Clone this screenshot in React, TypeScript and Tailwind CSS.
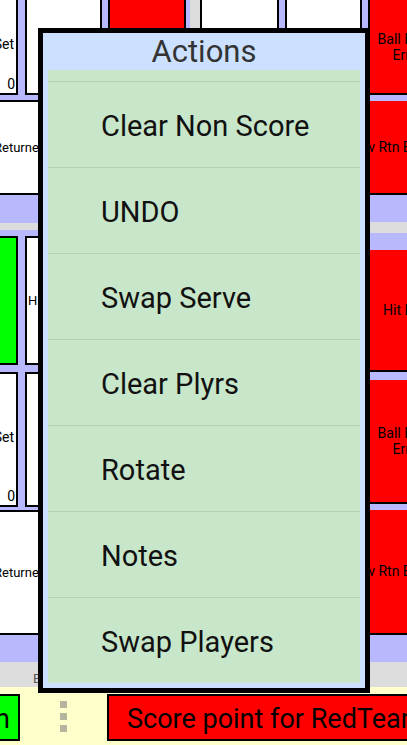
import React from "react"

const actions = ["Clear Non Score", "UNDO", "Swap Serve", "Clear Plyrs", "Rotate", "Notes", "Swap Players"]

function CountCell({ top }: { top?: boolean }) {
  return (
    <div
      className={`flex w-[18px] shrink-0 flex-col overflow-hidden border-r-2 border-b-2 border-black bg-white text-[14px] leading-none text-black ${
        top ? "" : "border-t-2"
      }`}
    >
      <div className="flex flex-1 items-center justify-end pr-[2px] pt-[11px] whitespace-nowrap">Set</div>
      <div className="pb-[2px] pr-[1px] text-right">0</div>
    </div>
  )
}

function LeftPanel() {
  return (
    <div className="flex w-[190px] shrink-0 flex-col">
      {/* row A */}
      <div className="flex h-[95px]">
        <CountCell top />
        <div className="ml-[7px] w-[77px] shrink-0 border-x-2 border-b-2 border-black bg-white" />
        <div className="ml-[6px] w-[78px] shrink-0 border-x-2 border-b-2 border-black bg-[#ff0000]" />
      </div>
      {/* row B */}
      <div className="mt-[5px] flex h-[95px]">
        <div className="flex w-[102px] shrink-0 items-center overflow-hidden border-y-2 border-r-2 border-black bg-white text-[13px] text-black">
          <span className="-ml-[6px] whitespace-nowrap">Returned</span>
        </div>
        <div className="ml-[6px] w-[78px] shrink-0 border-2 border-black bg-white" />
      </div>
      <div className="h-[28px]" />
      <div className="h-[7px] bg-[#dcdcdc]" />
      <div className="h-[6px]" />
      {/* row C */}
      <div className="flex h-[129px]">
        <div className="w-[18px] shrink-0 border-y-2 border-r-2 border-black bg-[#00ff00]" />
        <div className="ml-[7px] flex w-[77px] shrink-0 items-center overflow-hidden border-2 border-black bg-white pl-[1px] text-[13px] text-black">
          <span className="whitespace-nowrap">Hit Attempt</span>
        </div>
        <div className="ml-[6px] w-[78px] shrink-0 border-2 border-black bg-white" />
      </div>
      {/* row D */}
      <div className="mt-[7px] flex h-[135px]">
        <CountCell />
        <div className="ml-[7px] w-[77px] shrink-0 border-2 border-black bg-white" />
        <div className="ml-[6px] w-[78px] shrink-0 border-2 border-black bg-[#ff0000]" />
      </div>
      {/* row E */}
      <div className="mt-[3px] flex h-[125px]">
        <div className="flex w-[102px] shrink-0 items-center overflow-hidden border-y-2 border-r-2 border-black bg-white text-[13px] text-black">
          <span className="-ml-[6px] whitespace-nowrap">Returned</span>
        </div>
        <div className="ml-[6px] w-[78px] shrink-0 border-2 border-black bg-white" />
      </div>
      <div className="h-[27px]" />
      <div className="h-[25px] bg-[#dcdcdc] pl-[33px] pt-[10px] text-[13px] leading-none whitespace-nowrap text-[#555]">
        Blue Team
      </div>
    </div>
  )
}

function RightPanel() {
  return (
    <div className="flex w-[245px] shrink-0 flex-col">
      {/* row A */}
      <div className="flex h-[95px]">
        <div className="w-[79px] shrink-0 border-x-2 border-b-2 border-black bg-white" />
        <div className="ml-[6px] w-[77px] shrink-0 border-x-2 border-b-2 border-black bg-white" />
        <div className="ml-[6px] flex w-[77px] shrink-0 items-center justify-center border-b-2 border-l-2 border-black bg-[#ff0000] px-[2px] text-center text-[14px] leading-[16px] text-black">
          Ball Hand Error
        </div>
      </div>
      {/* row B */}
      <div className="mt-[6px] flex h-[94px]">
        <div className="w-[79px] shrink-0 border-x-2 border-b-2 border-black bg-white" />
        <div className="ml-[6px] flex w-[160px] shrink-0 items-center overflow-hidden border-b-2 border-l-2 border-black bg-[#ff0000] pl-[68px] text-[14px] text-black">
          <span className="whitespace-nowrap">Srv Rtn Err</span>
        </div>
      </div>
      <div className="h-[27px]" />
      <div className="h-[11px] bg-[#dcdcdc]" />
      <div className="h-[17px]" />
      {/* row C */}
      <div className="flex h-[122px]">
        <div className="w-[79px] shrink-0 border-x-2 border-b-2 border-black bg-white" />
        <div className="ml-[6px] w-[77px] shrink-0 border-x-2 border-b-2 border-black bg-white" />
        <div className="ml-[6px] flex w-[77px] shrink-0 items-center overflow-hidden border-b-2 border-l-2 border-black bg-[#ff0000] pl-[13px] text-[14px] text-black">
          <span className="whitespace-nowrap">Hit Err</span>
        </div>
      </div>
      {/* row D */}
      <div className="mt-[8px] flex h-[124px]">
        <div className="w-[79px] shrink-0 border-2 border-black bg-white" />
        <div className="ml-[6px] w-[77px] shrink-0 border-2 border-black bg-white" />
        <div className="ml-[6px] flex w-[77px] shrink-0 items-center justify-center border-b-2 border-l-2 border-black bg-[#ff0000] px-[2px] text-center text-[14px] leading-[16px] text-black">
          Ball Hand Error
        </div>
      </div>
      {/* row E */}
      <div className="mt-[6px] flex h-[125px]">
        <div className="w-[79px] shrink-0 border-2 border-black bg-white" />
        <div className="ml-[6px] flex w-[160px] shrink-0 items-center overflow-hidden border-b-2 border-l-2 border-black bg-[#ff0000] pl-[68px] text-[14px] text-black">
          <span className="whitespace-nowrap">Srv Rtn Err</span>
        </div>
      </div>
      <div className="h-[27px]" />
      <div className="h-[25px] bg-[#dcdcdc]" />
    </div>
  )
}

function ActionsDialog() {
  return (
    <div className="absolute left-[38px] top-[28px] flex h-[665px] w-[332px] flex-col border-[5px] border-black bg-[#cce0ff]">
      <div className="flex h-[37px] shrink-0 items-center justify-center text-[31px] leading-none text-[#333]">
        Actions
      </div>
      <div className="mx-[5px] flex-1 overflow-hidden bg-[#c8e6c9]">
        <div className="h-[11px]" />
        {actions.map((label) => (
          <div
            key={label}
            className="flex h-[86px] items-center border-t border-[#b3cfb4] pl-[53px] pt-[4px] text-[29px] leading-none text-[#111]"
          >
            {label}
          </div>
        ))}
      </div>
      <div className="h-[5px] shrink-0" />
    </div>
  )
}

function BottomBar() {
  return (
    <div className="flex h-[58px] items-start bg-[#ffffcc] pt-[7px]">
      <div className="flex h-[47px] w-[20px] shrink-0 items-center justify-end overflow-hidden border-y-2 border-r-2 border-black bg-[#00ff00] pr-[8px] pt-[4px] text-[27px] leading-none text-black">
        <span className="whitespace-nowrap">Green</span>
      </div>
      <div className="ml-[40px] flex flex-col gap-[5px] self-center pb-[7px]">
        <div className="h-[7px] w-[7px] bg-[#b5b59e]" />
        <div className="h-[7px] w-[7px] bg-[#b5b59e]" />
        <div className="h-[7px] w-[7px] bg-[#b5b59e]" />
      </div>
      <div className="ml-[40px] flex h-[47px] w-[320px] shrink-0 items-center border-2 border-black bg-[#ff0000] pl-[18px] pt-[4px] text-[27px] leading-none whitespace-nowrap text-black">
        Score point for RedTeam
      </div>
    </div>
  )
}

export default function App() {
  return (
    <div className="relative h-[745px] w-[407px] overflow-hidden bg-[#b8b8ff] font-['Roboto',sans-serif]">
      <div className="flex h-[687px] overflow-hidden">
        <LeftPanel />
        <div className="w-[10px] shrink-0 bg-[#dcdcdc]" />
        <RightPanel />
      </div>
      <BottomBar />
      <ActionsDialog />
    </div>
  )
}
